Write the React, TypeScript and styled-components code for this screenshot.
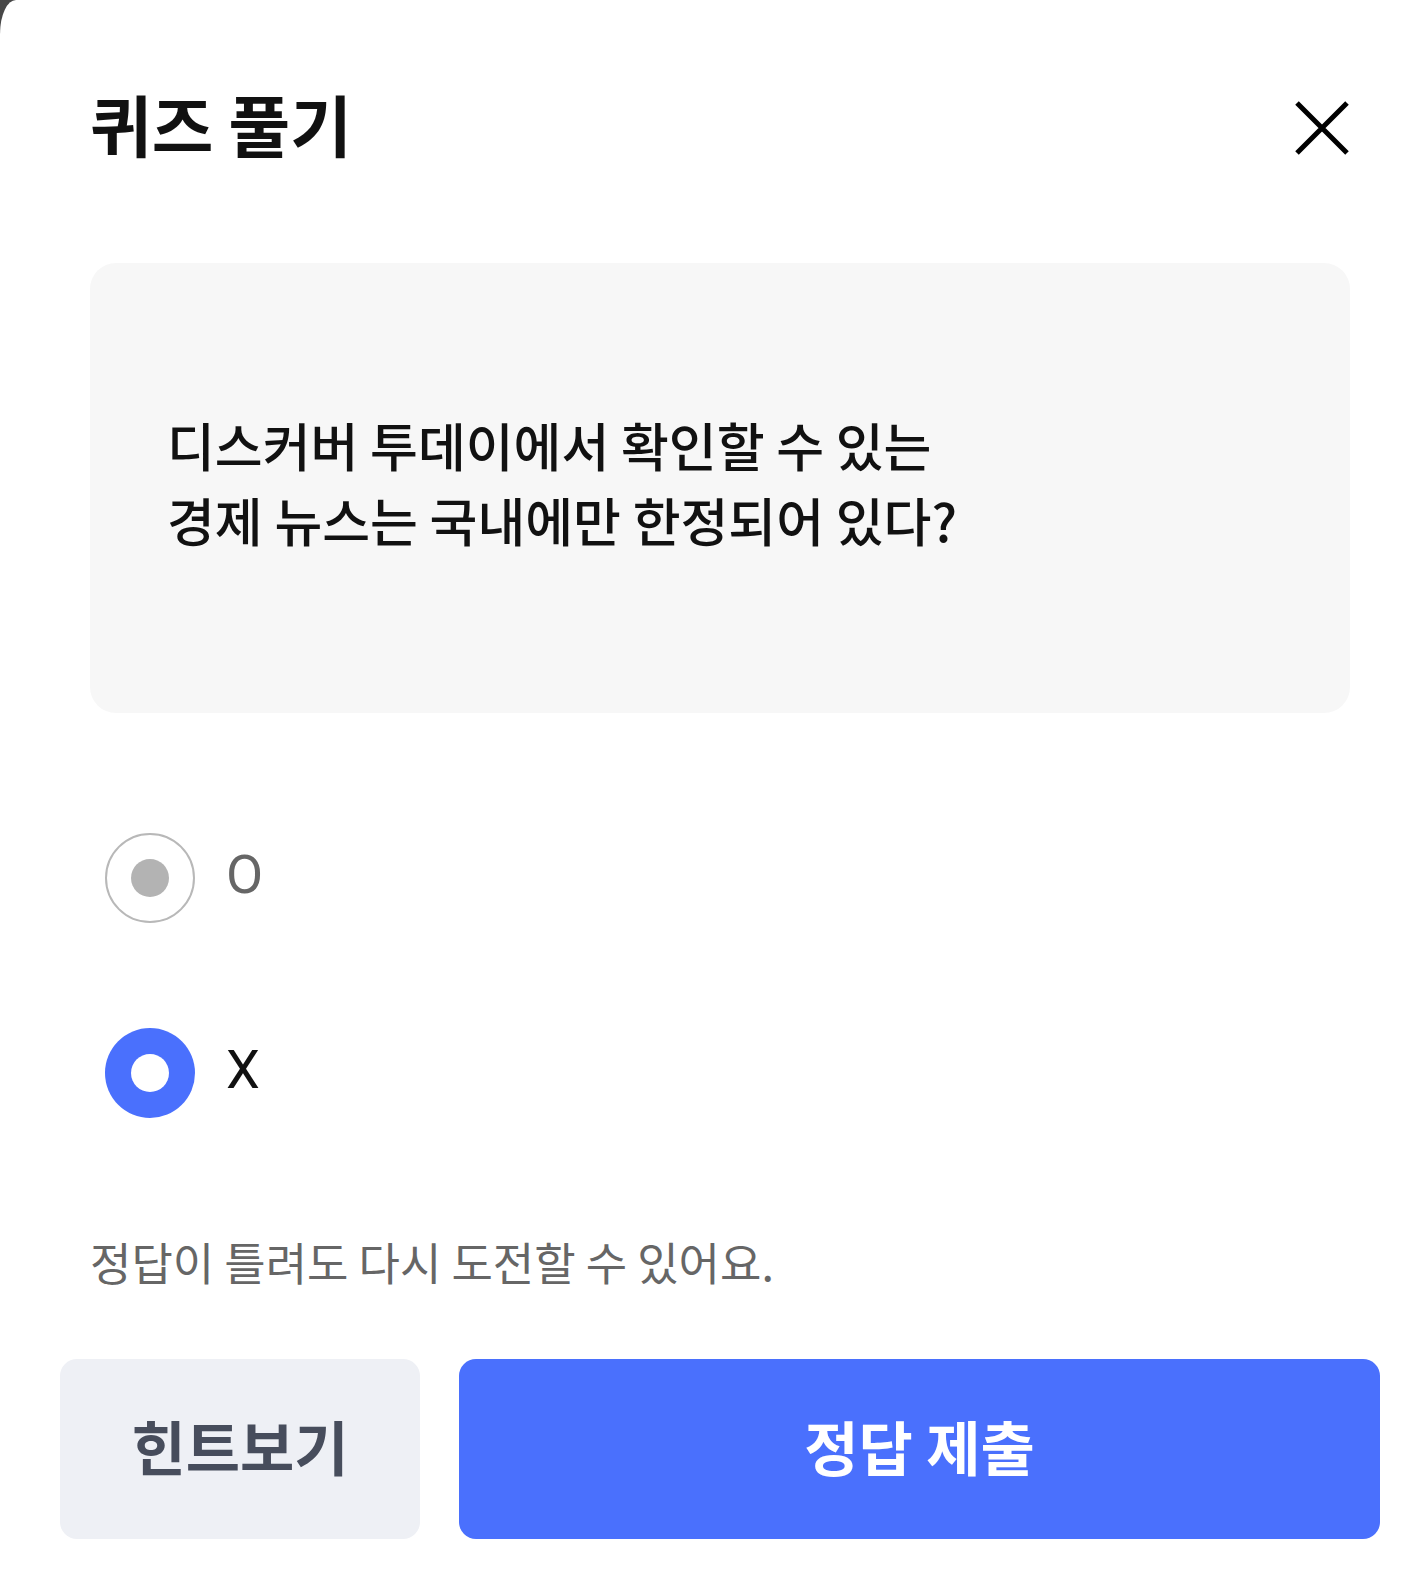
import * as React from 'react'
import styled, { createGlobalStyle } from 'styled-components'

const GlobalStyle = createGlobalStyle`
  html, body {
    margin: 0;
    padding: 0;
    background: #474747;
  }
  body {
    font-family: "Noto Sans CJK KR", "Noto Sans", sans-serif;
    color: #111;
  }
  * {
    box-sizing: border-box;
  }
`

const Sheet = styled.div`
  width: 1411px;
  min-height: 1576px;
  background: #fff;
  border-top-left-radius: 16px 34px;
  padding: 89px 31px 38px 60px;
  display: flex;
  flex-direction: column;
`

const Content = styled.div`
  padding: 0 30px 0 30px;
  display: flex;
  flex-direction: column;
`

const Header = styled.div`
  display: flex;
  justify-content: space-between;
  align-items: flex-start;
`

const Title = styled.h1`
  margin: 0;
  font-size: 67px;
  line-height: 67px;
  font-weight: 700;
  color: #111;
`

const CloseButton = styled.button`
  width: 56px;
  height: 56px;
  margin-top: 11px;
  padding: 0;
  border: none;
  background: none;
  display: flex;
  align-items: center;
  justify-content: center;
  cursor: pointer;
`

const QuestionCard = styled.div`
  margin-top: 107px;
  height: 450px;
  background: #f7f7f7;
  border-radius: 26px;
  padding: 144px 40px 0 77px;
`

const QuestionText = styled.p`
  margin: 0;
  font-size: 52px;
  line-height: 75px;
  font-weight: 500;
  color: #111;
`

const Options = styled.div`
  margin-top: 105px;
  display: flex;
  flex-direction: column;
  gap: 75px;
`

const OptionRow = styled.label`
  display: flex;
  align-items: center;
  height: 120px;
  cursor: pointer;
`

const RadioWrap = styled.span`
  width: 120px;
  height: 120px;
  display: flex;
  align-items: center;
  justify-content: center;
`

const RadioCircle = styled.span<{ $checked: boolean }>`
  width: 90px;
  height: 90px;
  border-radius: 50%;
  display: flex;
  align-items: center;
  justify-content: center;
  background: ${p => (p.$checked ? '#4a70fd' : '#fff')};
  border: ${p => (p.$checked ? 'none' : '2.5px solid #b8b8b8')};
`

const RadioDot = styled.span<{ $checked: boolean }>`
  width: 38px;
  height: 38px;
  border-radius: 50%;
  background: ${p => (p.$checked ? '#fff' : '#b3b3b3')};
`

const OptionLabel = styled.span<{ $checked: boolean }>`
  margin-left: 16px;
  margin-bottom: 7px;
  font-family: Roboto, "Noto Sans", sans-serif;
  font-size: 54px;
  line-height: 54px;
  color: ${p => (p.$checked ? '#111' : '#666')};
`

const Helper = styled.p`
  margin: 106px 0 0;
  font-size: 45px;
  line-height: 45px;
  color: #666;
`

const ButtonRow = styled.div`
  margin-top: 75px;
  display: flex;
  gap: 39px;
`

const ActionButton = styled.button<{ $primary?: boolean }>`
  height: 180px;
  border: none;
  border-radius: 17px;
  padding: 0 0 8px;
  font-family: "Noto Sans CJK KR", "Noto Sans", sans-serif;
  font-size: 59px;
  line-height: 59px;
  font-weight: 600;
  cursor: pointer;
  flex: ${p => (p.$primary ? '1' : '0 0 360px')};
  background: ${p => (p.$primary ? '#4a70fd' : '#eef0f5')};
  color: ${p => (p.$primary ? '#fff' : '#474d5c')};
`

const options = [
  { key: 'o', label: 'O' },
  { key: 'x', label: 'X' }
]

const App: React.FunctionComponent = () => {
  const [answer, setAnswer] = React.useState<string>('x')

  return (
    <>
      <GlobalStyle />
      <Sheet>
        <Content>
          <Header>
            <Title>퀴즈 풀기</Title>
            <CloseButton aria-label="닫기">
              <svg width="56" height="56" viewBox="0 0 56 56">
                <path d="M3 3 L53 53 M53 3 L3 53" stroke="#000" strokeWidth="5" fill="none" />
              </svg>
            </CloseButton>
          </Header>

          <QuestionCard>
            <QuestionText>
              디스커버 투데이에서 확인할 수 있는<br />
              경제 뉴스는 국내에만 한정되어 있다?
            </QuestionText>
          </QuestionCard>

          <Options>
            {options.map(option => {
              const checked = answer === option.key
              return (
                <OptionRow key={option.key} onClick={() => setAnswer(option.key)}>
                  <RadioWrap>
                    <RadioCircle $checked={checked}>
                      <RadioDot $checked={checked} />
                    </RadioCircle>
                  </RadioWrap>
                  <OptionLabel $checked={checked}>{option.label}</OptionLabel>
                </OptionRow>
              )
            })}
          </Options>

          <Helper>정답이 틀려도 다시 도전할 수 있어요.</Helper>
        </Content>

        <ButtonRow>
          <ActionButton>힌트보기</ActionButton>
          <ActionButton $primary>정답 제출</ActionButton>
        </ButtonRow>
      </Sheet>
    </>
  )
}

export default App
